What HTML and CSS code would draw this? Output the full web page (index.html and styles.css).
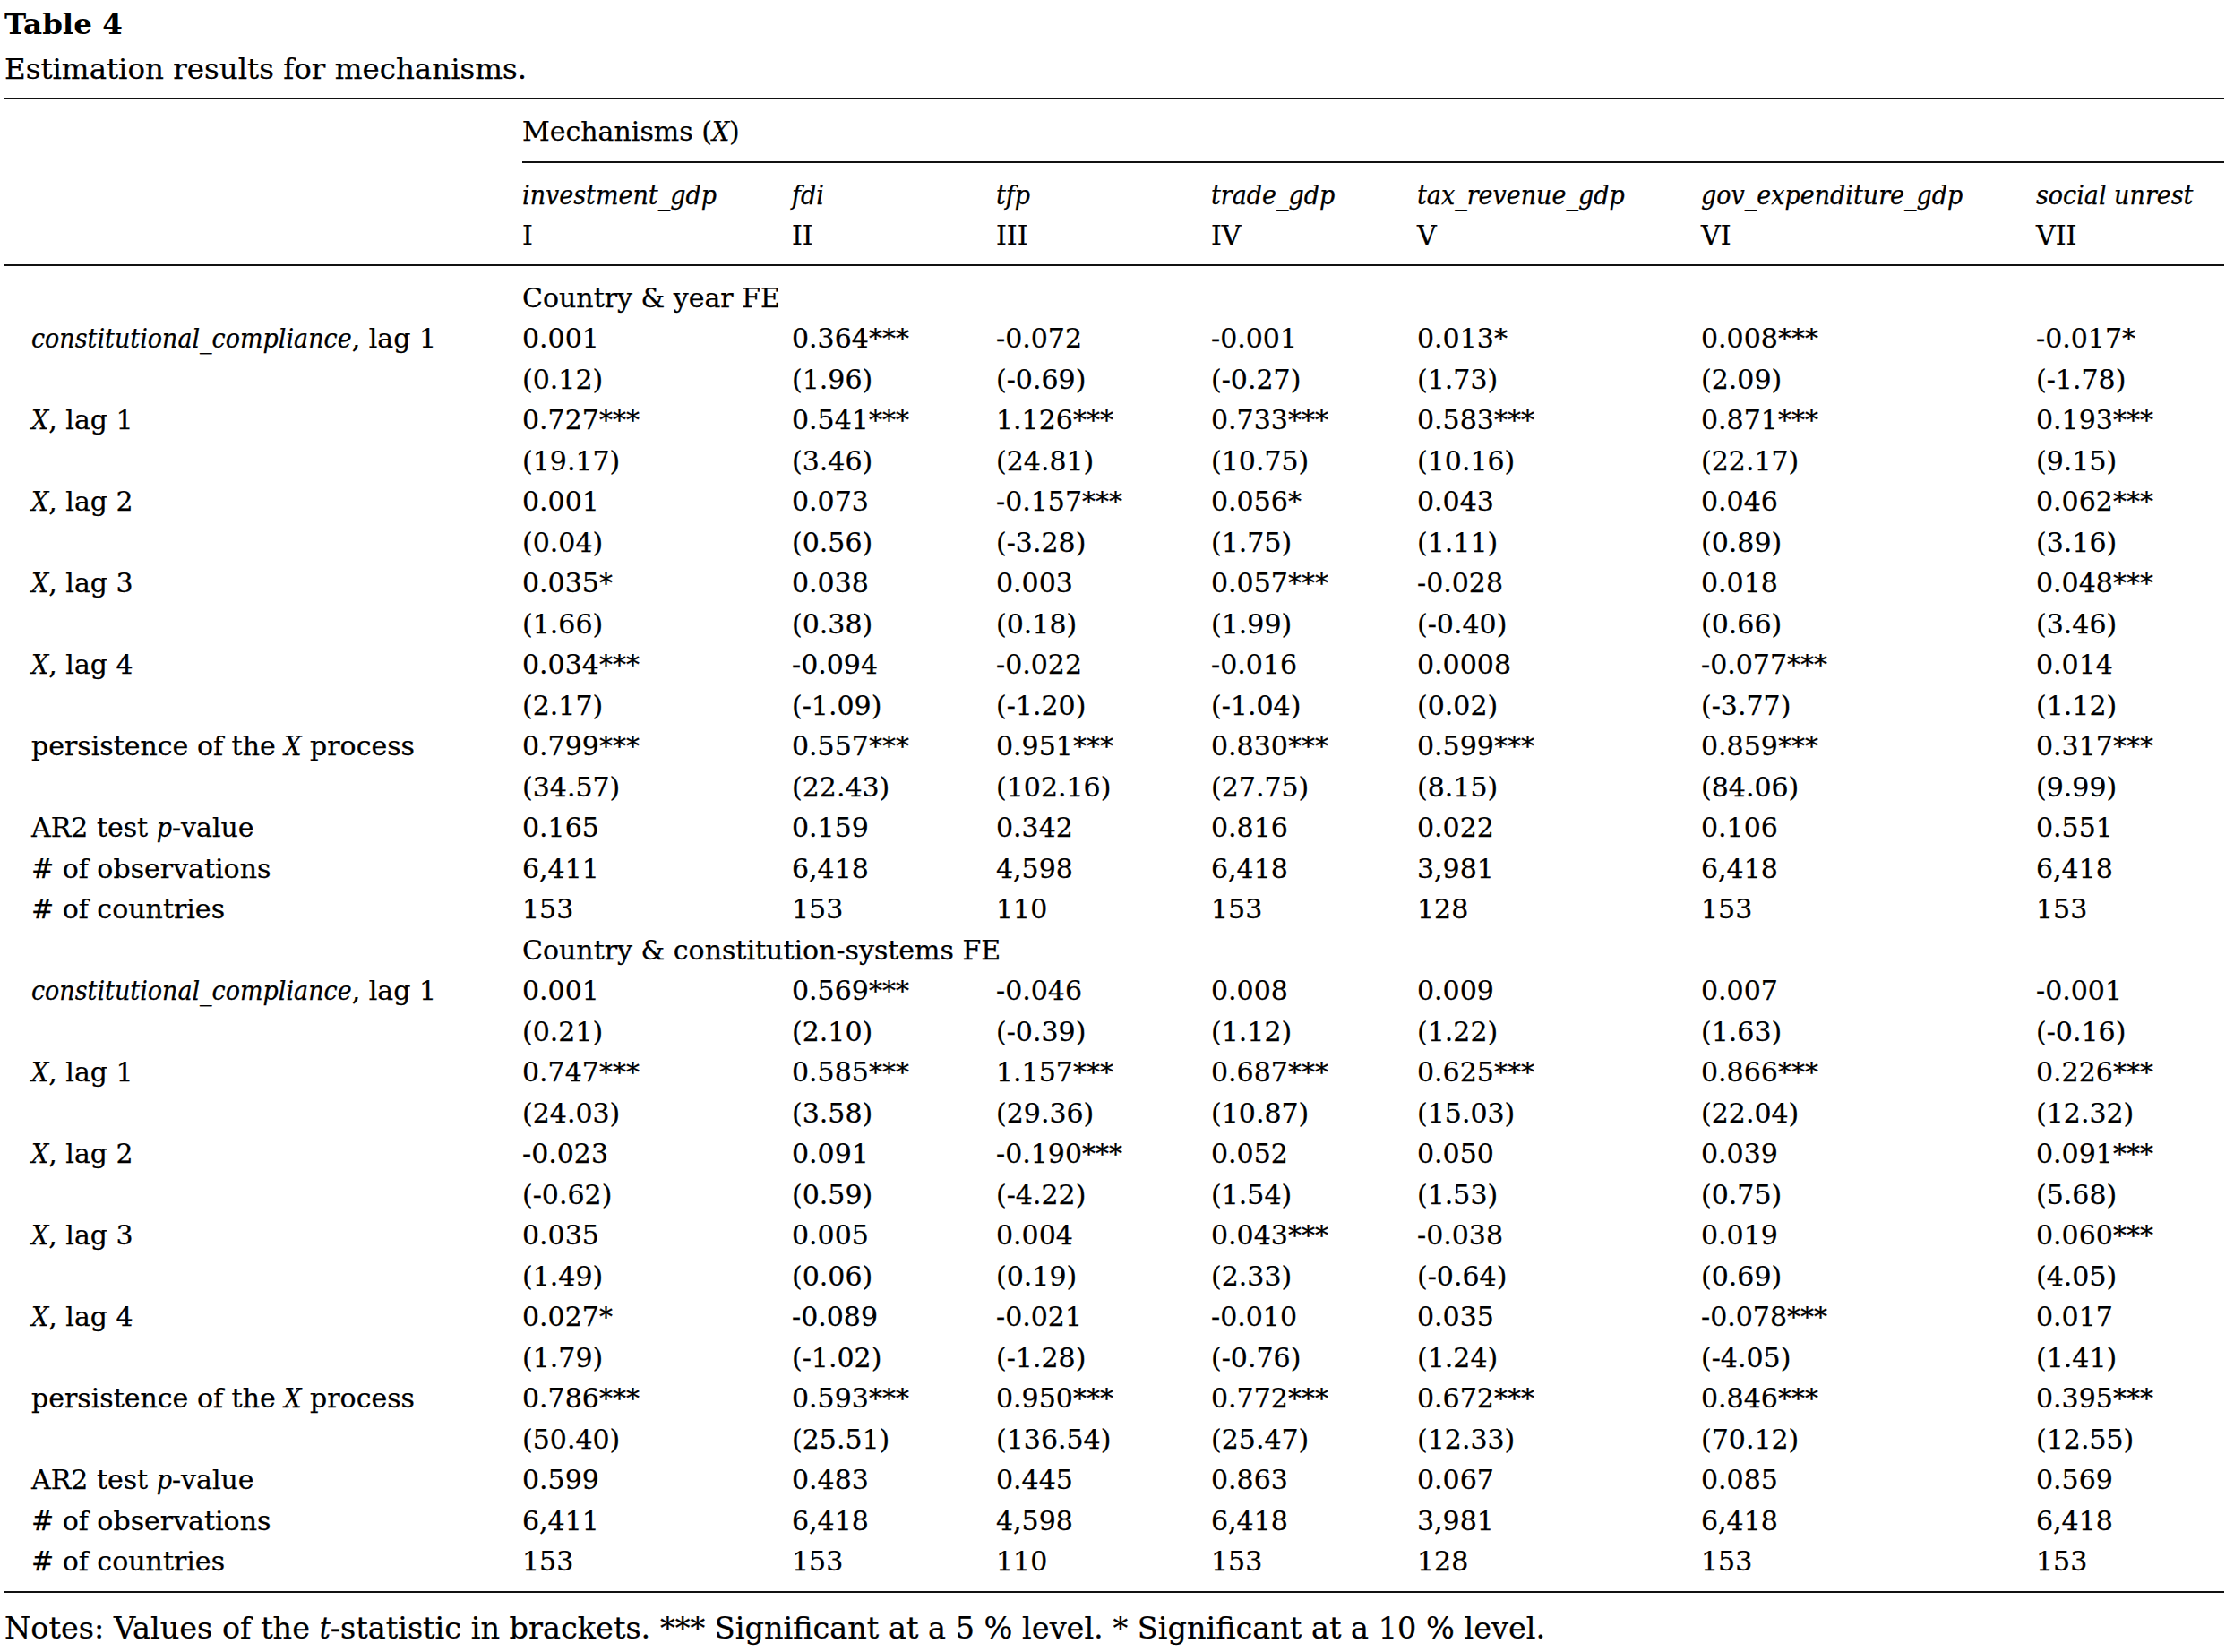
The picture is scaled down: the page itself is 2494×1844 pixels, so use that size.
FILE: index.html
```html
<!DOCTYPE html>
<html lang="en">
<head>
<meta charset="utf-8">
<title>Table 4</title>
<link rel="stylesheet" href="styles.css">
</head>
<body>
<div class="page">
  <div class="caption">
    <div class="label">Table 4</div>
    <div class="title">Estimation results for mechanisms.</div>
  </div>
  <table class="results">
    <colgroup>
      <col class="c0"><col class="c1"><col class="c2"><col class="c3"><col class="c4"><col class="c5"><col class="c6"><col class="c7">
    </colgroup>
    <thead>
      <tr class="h1">
        <th></th>
        <th colspan="7">Mechanisms (<i>X</i>)</th>
      </tr>
      <tr class="h2">
        <th></th>
        <th><i>investment_gdp</i><br>I</th>
        <th><i>fdi</i><br>II</th>
        <th><i>tfp</i><br>III</th>
        <th><i>trade_gdp</i><br>IV</th>
        <th><i>tax_revenue_gdp</i><br>V</th>
        <th><i>gov_expenditure_gdp</i><br>VI</th>
        <th><i>social unrest</i><br>VII</th>
      </tr>
    </thead>
    <tbody>
      <tr><td></td><td colspan="7">Country &amp; year FE</td></tr>
      <tr><td><i>constitutional_compliance</i>, lag 1</td><td>0.001</td><td>0.364***</td><td>-0.072</td><td>-0.001</td><td>0.013*</td><td>0.008***</td><td>-0.017*</td></tr>
      <tr><td></td><td>(0.12)</td><td>(1.96)</td><td>(-0.69)</td><td>(-0.27)</td><td>(1.73)</td><td>(2.09)</td><td>(-1.78)</td></tr>
      <tr><td><i>X</i>, lag 1</td><td>0.727***</td><td>0.541***</td><td>1.126***</td><td>0.733***</td><td>0.583***</td><td>0.871***</td><td>0.193***</td></tr>
      <tr><td></td><td>(19.17)</td><td>(3.46)</td><td>(24.81)</td><td>(10.75)</td><td>(10.16)</td><td>(22.17)</td><td>(9.15)</td></tr>
      <tr><td><i>X</i>, lag 2</td><td>0.001</td><td>0.073</td><td>-0.157***</td><td>0.056*</td><td>0.043</td><td>0.046</td><td>0.062***</td></tr>
      <tr><td></td><td>(0.04)</td><td>(0.56)</td><td>(-3.28)</td><td>(1.75)</td><td>(1.11)</td><td>(0.89)</td><td>(3.16)</td></tr>
      <tr><td><i>X</i>, lag 3</td><td>0.035*</td><td>0.038</td><td>0.003</td><td>0.057***</td><td>-0.028</td><td>0.018</td><td>0.048***</td></tr>
      <tr><td></td><td>(1.66)</td><td>(0.38)</td><td>(0.18)</td><td>(1.99)</td><td>(-0.40)</td><td>(0.66)</td><td>(3.46)</td></tr>
      <tr><td><i>X</i>, lag 4</td><td>0.034***</td><td>-0.094</td><td>-0.022</td><td>-0.016</td><td>0.0008</td><td>-0.077***</td><td>0.014</td></tr>
      <tr><td></td><td>(2.17)</td><td>(-1.09)</td><td>(-1.20)</td><td>(-1.04)</td><td>(0.02)</td><td>(-3.77)</td><td>(1.12)</td></tr>
      <tr><td>persistence of the <i>X</i> process</td><td>0.799***</td><td>0.557***</td><td>0.951***</td><td>0.830***</td><td>0.599***</td><td>0.859***</td><td>0.317***</td></tr>
      <tr><td></td><td>(34.57)</td><td>(22.43)</td><td>(102.16)</td><td>(27.75)</td><td>(8.15)</td><td>(84.06)</td><td>(9.99)</td></tr>
      <tr><td>AR2 test <i>p</i>-value</td><td>0.165</td><td>0.159</td><td>0.342</td><td>0.816</td><td>0.022</td><td>0.106</td><td>0.551</td></tr>
      <tr><td># of observations</td><td>6,411</td><td>6,418</td><td>4,598</td><td>6,418</td><td>3,981</td><td>6,418</td><td>6,418</td></tr>
      <tr><td># of countries</td><td>153</td><td>153</td><td>110</td><td>153</td><td>128</td><td>153</td><td>153</td></tr>
      <tr><td></td><td colspan="7">Country &amp; constitution-systems FE</td></tr>
      <tr><td><i>constitutional_compliance</i>, lag 1</td><td>0.001</td><td>0.569***</td><td>-0.046</td><td>0.008</td><td>0.009</td><td>0.007</td><td>-0.001</td></tr>
      <tr><td></td><td>(0.21)</td><td>(2.10)</td><td>(-0.39)</td><td>(1.12)</td><td>(1.22)</td><td>(1.63)</td><td>(-0.16)</td></tr>
      <tr><td><i>X</i>, lag 1</td><td>0.747***</td><td>0.585***</td><td>1.157***</td><td>0.687***</td><td>0.625***</td><td>0.866***</td><td>0.226***</td></tr>
      <tr><td></td><td>(24.03)</td><td>(3.58)</td><td>(29.36)</td><td>(10.87)</td><td>(15.03)</td><td>(22.04)</td><td>(12.32)</td></tr>
      <tr><td><i>X</i>, lag 2</td><td>-0.023</td><td>0.091</td><td>-0.190***</td><td>0.052</td><td>0.050</td><td>0.039</td><td>0.091***</td></tr>
      <tr><td></td><td>(-0.62)</td><td>(0.59)</td><td>(-4.22)</td><td>(1.54)</td><td>(1.53)</td><td>(0.75)</td><td>(5.68)</td></tr>
      <tr><td><i>X</i>, lag 3</td><td>0.035</td><td>0.005</td><td>0.004</td><td>0.043***</td><td>-0.038</td><td>0.019</td><td>0.060***</td></tr>
      <tr><td></td><td>(1.49)</td><td>(0.06)</td><td>(0.19)</td><td>(2.33)</td><td>(-0.64)</td><td>(0.69)</td><td>(4.05)</td></tr>
      <tr><td><i>X</i>, lag 4</td><td>0.027*</td><td>-0.089</td><td>-0.021</td><td>-0.010</td><td>0.035</td><td>-0.078***</td><td>0.017</td></tr>
      <tr><td></td><td>(1.79)</td><td>(-1.02)</td><td>(-1.28)</td><td>(-0.76)</td><td>(1.24)</td><td>(-4.05)</td><td>(1.41)</td></tr>
      <tr><td>persistence of the <i>X</i> process</td><td>0.786***</td><td>0.593***</td><td>0.950***</td><td>0.772***</td><td>0.672***</td><td>0.846***</td><td>0.395***</td></tr>
      <tr><td></td><td>(50.40)</td><td>(25.51)</td><td>(136.54)</td><td>(25.47)</td><td>(12.33)</td><td>(70.12)</td><td>(12.55)</td></tr>
      <tr><td>AR2 test <i>p</i>-value</td><td>0.599</td><td>0.483</td><td>0.445</td><td>0.863</td><td>0.067</td><td>0.085</td><td>0.569</td></tr>
      <tr><td># of observations</td><td>6,411</td><td>6,418</td><td>4,598</td><td>6,418</td><td>3,981</td><td>6,418</td><td>6,418</td></tr>
      <tr><td># of countries</td><td>153</td><td>153</td><td>110</td><td>153</td><td>128</td><td>153</td><td>153</td></tr>
    </tbody>
  </table>
  <p class="notes">Notes: Values of the <i>t</i>-statistic in brackets. *** Significant at a 5 % level. * Significant at a 10 % level.</p>
</div>
</body>
</html>
```

FILE: styles.css
```css
html, body {
  margin: 0;
  padding: 0;
  background: #ffffff;
}

body {
  font-family: "DejaVu Serif", "Liberation Serif", serif;
  color: #000000;
  font-size: 30px;
  -webkit-text-stroke: 0.25px #000000;
}

.page {
  padding: 2px 11px 0 5px;
}

.caption {
  font-size: 32.5px;
  line-height: 50px;
}

.caption .label {
  font-weight: bold;
  -webkit-text-stroke: 0;
}

i {
  font-stretch: condensed;
}

.results {
  margin-top: 7px;
  width: 2478px;
  border-collapse: collapse;
  table-layout: fixed;
  border-top: 2px solid #111111;
  border-bottom: 2px solid #111111;
}

.c0 { width: 578px; }
.c1 { width: 301px; }
.c2 { width: 228px; }
.c3 { width: 240px; }
.c4 { width: 230px; }
.c5 { width: 317px; }
.c6 { width: 374px; }
.c7 { width: 210px; }

.results th,
.results td {
  padding: 0;
  text-align: left;
  font-weight: normal;
  line-height: 45.5px;
  white-space: nowrap;
  vertical-align: top;
}

.results td:first-child,
.results th:first-child {
  padding-left: 30px;
}

.h1 th {
  padding-top: 13px;
  padding-bottom: 10px;
}

.h1 th + th {
  border-bottom: 2px solid #111111;
}

.h2 th {
  padding-top: 13px;
  padding-bottom: 9px;
  border-bottom: 2px solid #111111;
}

.results tbody tr:first-child td {
  padding-top: 13px;
}

.results tbody tr:last-child td {
  padding-bottom: 10px;
}

.notes {
  margin: 17px 0 0 0;
  font-size: 33.5px;
  line-height: 45.5px;
}
```
